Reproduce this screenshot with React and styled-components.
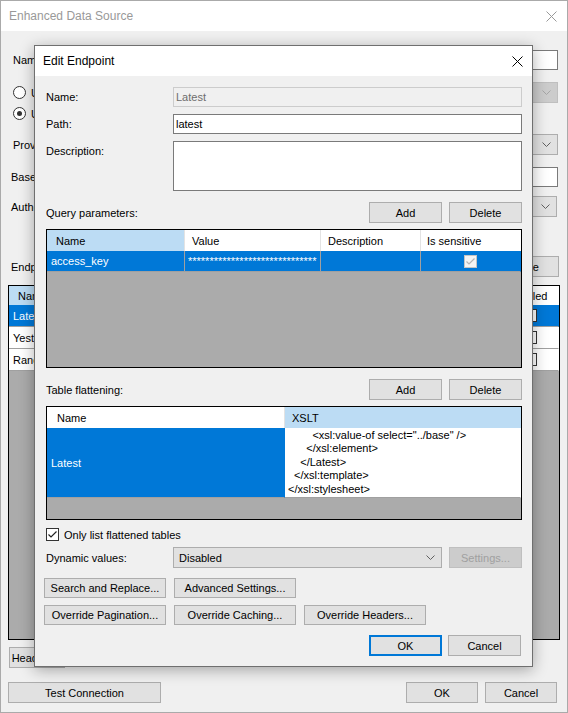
import React from 'react';
import styled, { createGlobalStyle, css } from 'styled-components';

const Global = createGlobalStyle`
  html, body { margin: 0; padding: 0; background: #f0f0f0; }
  body { font-family: "Liberation Sans", Arial, sans-serif; font-size: 11px; color: #000; }
  * { box-sizing: border-box; }
`;

const Window = styled.div`
  position: relative;
  width: 568px;
  height: 713px;
  border: 1px solid #aaaaaa;
  background: #f0f0f0;
  display: flex;
  flex-direction: column;
  overflow: hidden;
`;

const TitleBar = styled.div`
  flex-shrink: 0;
  height: 30px;
  background: #ffffff;
  display: flex;
  align-items: center;
  justify-content: space-between;
  padding: 0 ${(p) => p.$pr}px 0 ${(p) => p.$pl}px;
`;

const TitleText = styled.span`
  font-size: 12px;
  color: ${(p) => (p.$inactive ? '#999999' : '#000000')};
`;

const CloseIcon = ({ color }) => (
  <svg width="11" height="11" viewBox="0 0 11 11">
    <path d="M0.5 0.5 L10.5 10.5 M10.5 0.5 L0.5 10.5" stroke={color} strokeWidth="1" fill="none" />
  </svg>
);

const Chevron = ({ color }) => (
  <svg width="9" height="5" viewBox="0 0 9 5">
    <polyline points="0.5,0.5 4.5,4.5 8.5,0.5" stroke={color} strokeWidth="1" fill="none" />
  </svg>
);

const CheckMark = ({ color }) => (
  <svg width="11" height="11" viewBox="0 0 11 11">
    <polyline points="1.5,5.5 4,8 9.5,2.5" stroke={color} strokeWidth="1.2" fill="none" />
  </svg>
);

/* ---------- shared controls ---------- */

const TextBox = styled.div`
  flex-shrink: 0;
  width: ${(p) => p.$w}px;
  height: ${(p) => p.$h || 20}px;
  margin-right: ${(p) => p.$mr || 0}px;
  background: ${(p) => (p.$disabled ? '#f0f0f0' : '#ffffff')};
  border: 1px solid ${(p) => (p.$disabled ? '#cccccc' : '#7a7a7a')};
  color: ${(p) => (p.$disabled ? '#6d6d6d' : '#000000')};
  padding: 2px 0 0 2px;
  line-height: 14px;
`;

const Combo = styled.div`
  flex-shrink: 0;
  width: ${(p) => p.$w}px;
  height: 21px;
  margin-right: ${(p) => p.$mr || 0}px;
  display: flex;
  align-items: center;
  justify-content: space-between;
  padding: 0 6px 0 5px;
  background: ${(p) => (p.$disabled ? '#cccccc' : '#e1e1e1')};
  border: 1px solid ${(p) => (p.$disabled ? '#bfbfbf' : '#adadad')};
  color: ${(p) => (p.$disabled ? '#a0a0a0' : '#000000')};
`;

const Button = styled.button`
  flex-shrink: 0;
  width: ${(p) => p.$w}px;
  height: ${(p) => p.$h || 21}px;
  margin: 0 ${(p) => p.$mr || 0}px 0 ${(p) => p.$ml || 0}px;
  padding: 0;
  font: inherit;
  color: #000;
  background: #e1e1e1;
  border: 1px solid #adadad;
  display: flex;
  align-items: center;
  justify-content: center;
  white-space: nowrap;
  ${(p) =>
    p.$disabled &&
    css`
      background: #cccccc;
      border-color: #bfbfbf;
      color: #a0a0a0;
    `}
  ${(p) =>
    p.$default &&
    css`
      border: 2px solid #0078d7;
    `}
`;

const Radio = styled.span`
  flex-shrink: 0;
  width: 13px;
  height: 13px;
  border-radius: 50%;
  border: 1px solid #333333;
  background: #ffffff;
  display: inline-flex;
  align-items: center;
  justify-content: center;
  &::after {
    content: '';
    width: 5px;
    height: 5px;
    border-radius: 50%;
    background: #333333;
    display: ${(p) => (p.$checked ? 'block' : 'none')};
  }
`;

const CheckBox = styled.span`
  flex-shrink: 0;
  width: 13px;
  height: 13px;
  border: 1px solid ${(p) => (p.$muted ? '#c4c4c4' : '#333333')};
  background: ${(p) => (p.$muted ? '#f4f4f4' : '#ffffff')};
  display: inline-flex;
  align-items: center;
  justify-content: center;
`;

const Spacer = styled.div`
  flex: 1;
`;

/* ---------- grids ---------- */

const GridFrame = styled.div`
  flex: 1;
  height: ${(p) => p.$h}px;
  border: 1px solid #000000;
  background: #ababab;
  overflow: hidden;
`;

const GridRow = styled.div`
  display: grid;
  grid-template-columns: ${(p) => p.$cols};
  height: ${(p) => p.$h}px;
`;

const HeadCell = styled.div`
  display: flex;
  align-items: center;
  padding-left: ${(p) => p.$pl || 7}px;
  background: ${(p) => (p.$active ? '#bcdcf4' : '#ffffff')};
  border-right: 1px solid ${(p) => (p.$last ? 'transparent' : '#e3e3e3')};
  white-space: nowrap;
  overflow: hidden;
`;

const Cell = styled.div`
  display: flex;
  align-items: center;
  justify-content: ${(p) => (p.$center ? 'center' : 'flex-start')};
  padding-left: ${(p) => (p.$center ? 0 : p.$pl || 4)}px;
  background: ${(p) => (p.$sel ? '#0078d7' : '#ffffff')};
  color: ${(p) => (p.$sel ? '#ffffff' : '#000000')};
  border-right: 1px solid ${(p) => (p.$noSep ? 'transparent' : '#a0a0a0')};
  border-bottom: 1px solid #a0a0a0;
  white-space: nowrap;
  overflow: hidden;
`;

const Stars = styled.span`
  font-size: 11px;
`;

const XsltText = styled.pre`
  margin: 0;
  font: inherit;
  line-height: 13.6px;
  white-space: pre;
`;

/* ---------- outer window ---------- */

const OuterBody = styled.div`
  flex: 1;
  display: flex;
  flex-direction: column;
  padding: 0 7px;
`;

const ORow = styled.div`
  flex-shrink: 0;
  display: flex;
  align-items: center;
  height: ${(p) => p.$h}px;
  margin-top: ${(p) => p.$mt}px;
  padding-left: ${(p) => p.$pl || 0}px;
  gap: ${(p) => p.$gap || 0}px;
`;

const OLabel = styled.span`
  white-space: nowrap;
`;

/* ---------- dialog (overlay over the outer window) ---------- */

const Dialog = styled.div`
  position: absolute;
  left: 33px;
  top: 44px;
  width: 499px;
  height: 622px;
  border: 1px solid #6f6f6f;
  background: #f0f0f0;
  box-shadow: 0 3px 14px rgba(0, 0, 0, 0.32);
  display: flex;
  flex-direction: column;
`;

const DialogBody = styled.div`
  flex: 1;
  display: flex;
  flex-direction: column;
  padding: 0 10px 0 11px;
`;

const DRow = styled.div`
  flex-shrink: 0;
  display: flex;
  align-items: ${(p) => (p.$top ? 'flex-start' : 'center')};
  justify-content: ${(p) => (p.$end ? 'flex-end' : 'flex-start')};
  height: ${(p) => p.$h}px;
  margin: ${(p) => p.$mt}px ${(p) => p.$mr || 0}px 0 ${(p) => p.$ml || 0}px;
  gap: ${(p) => p.$gap || 0}px;
`;

const DLabel = styled.div`
  flex-shrink: 0;
  width: ${(p) => p.$w || 127}px;
  padding-top: ${(p) => p.$pt || 0}px;
  white-space: nowrap;
`;

const CheckLabel = styled.span`
  margin-left: 5px;
`;

const ButtonPair = styled.div`
  display: flex;
  gap: 7px;
  margin-left: auto;
`;

const xslt = `        <xsl:value-of select="../base" />
      </xsl:element>
    </Latest>
  </xsl:template>
</xsl:stylesheet>`;

export default function App() {
  const outerCols = '160px 150px 183px 57px';
  const q1Cols = '138px 136px 100px 100px';
  const q2Cols = '238px 236px';
  const outerRows = [
    ['Latest', 'latest', true],
    ['Yesterday', 'yesterday', false],
    ['Range', 'range', false],
  ];

  return (
    <>
      <Global />
      <Window>
        <TitleBar $pl={8} $pr={10}>
          <TitleText $inactive>Enhanced Data Source</TitleText>
          <CloseIcon color="#999999" />
        </TitleBar>
        <OuterBody>
          <ORow $h={20} $mt={19} $pl={5}>
            <OLabel>Name:</OLabel>
            <Spacer />
            <TextBox $w={438} $mr={2}>Enhanced source</TextBox>
          </ORow>
          <ORow $h={21} $mt={12} $pl={5} $gap={5}>
            <Radio />
            <OLabel>Use provider template</OLabel>
            <Spacer />
            <Combo $w={300} $mr={2} $disabled>
              <span />
              <Chevron color="#a6a6a6" />
            </Combo>
          </ORow>
          <ORow $h={13} $mt={4} $pl={5} $gap={5}>
            <Radio $checked />
            <OLabel>Use custom settings</OLabel>
          </ORow>
          <ORow $h={21} $mt={14} $pl={5}>
            <OLabel>Provider:</OLabel>
            <Spacer />
            <Combo $w={438} $mr={2}>
              <span>REST</span>
              <Chevron color="#606060" />
            </Combo>
          </ORow>
          <ORow $h={20} $mt={12} $pl={3}>
            <OLabel>Base URL:</OLabel>
            <Spacer />
            <TextBox $w={438} $mr={2}>https://api.example.com/</TextBox>
          </ORow>
          <ORow $h={21} $mt={9} $pl={3}>
            <OLabel>Authentication:</OLabel>
            <Spacer />
            <Combo $w={436} $mr={3}>
              <span>Query parameters</span>
              <Chevron color="#606060" />
            </Combo>
          </ORow>
          <ORow $h={21} $mt={39} $pl={3} $gap={7}>
            <OLabel>Endpoints:</OLabel>
            <Spacer />
            <Button $w={72}>Add</Button>
            <Button $w={72} $mr={1}>Delete</Button>
          </ORow>
          <ORow $h={355} $mt={8}>
            <GridFrame $h={355}>
              <GridRow $cols={outerCols} $h={19}>
                <HeadCell $active $pl={9}>Name</HeadCell>
                <HeadCell>Path</HeadCell>
                <HeadCell>Description</HeadCell>
                <HeadCell $last $pl={5}>Enabled</HeadCell>
              </GridRow>
              {outerRows.map(([n, p, sel]) => (
                <GridRow key={n} $cols={outerCols} $h={22}>
                  <Cell $sel={sel}>{n}</Cell>
                  <Cell $sel={sel}>{p}</Cell>
                  <Cell $sel={sel} />
                  <Cell $sel={sel} $center $noSep>
                    <CheckBox />
                  </Cell>
                </GridRow>
              ))}
            </GridFrame>
          </ORow>
          <ORow $h={21} $mt={7}>
            <Button $w={56} $ml={1}>Headers...</Button>
          </ORow>
          <ORow $h={21} $mt={14} $gap={7}>
            <Button $w={153}>Test Connection</Button>
            <Spacer />
            <Button $w={72}>OK</Button>
            <Button $w={72} $mr={3}>Cancel</Button>
          </ORow>
        </OuterBody>

        <Dialog>
          <TitleBar $pl={8} $pr={9}>
            <TitleText>Edit Endpoint</TitleText>
            <CloseIcon color="#000000" />
          </TitleBar>
          <DialogBody>
            <DRow $h={20} $mt={11}>
              <DLabel>Name:</DLabel>
              <TextBox $w={349} $disabled>Latest</TextBox>
            </DRow>
            <DRow $h={20} $mt={7}>
              <DLabel>Path:</DLabel>
              <TextBox $w={349}>latest</TextBox>
            </DRow>
            <DRow $h={50} $mt={7} $top>
              <DLabel $pt={4}>Description:</DLabel>
              <TextBox $w={349} $h={50} />
            </DRow>
            <DRow $h={21} $mt={11}>
              <DLabel>Query parameters:</DLabel>
              <ButtonPair>
                <Button $w={73}>Add</Button>
                <Button $w={73}>Delete</Button>
              </ButtonPair>
            </DRow>
            <DRow $h={139} $mt={6}>
              <GridFrame $h={139}>
                <GridRow $cols={q1Cols} $h={21}>
                  <HeadCell $active $pl={9}>Name</HeadCell>
                  <HeadCell>Value</HeadCell>
                  <HeadCell>Description</HeadCell>
                  <HeadCell $last $pl={6}>Is sensitive</HeadCell>
                </GridRow>
                <GridRow $cols={q1Cols} $h={21}>
                  <Cell $sel>access_key</Cell>
                  <Cell $sel $pl={3}>
                    <Stars>{'*'.repeat(30)}</Stars>
                  </Cell>
                  <Cell $sel />
                  <Cell $sel $center $noSep>
                    <CheckBox $muted>
                      <CheckMark color="#b4b4b4" />
                    </CheckBox>
                  </Cell>
                </GridRow>
              </GridFrame>
            </DRow>
            <DRow $h={21} $mt={11}>
              <DLabel>Table flattening:</DLabel>
              <ButtonPair>
                <Button $w={73}>Add</Button>
                <Button $w={73}>Delete</Button>
              </ButtonPair>
            </DRow>
            <DRow $h={114} $mt={6}>
              <GridFrame $h={114}>
                <GridRow $cols={q2Cols} $h={21}>
                  <HeadCell $pl={10}>Name</HeadCell>
                  <HeadCell $active $last>XSLT</HeadCell>
                </GridRow>
                <GridRow $cols={q2Cols} $h={70}>
                  <Cell $sel $noSep>Latest</Cell>
                  <Cell $pl={3} $noSep>
                    <XsltText>{xslt}</XsltText>
                  </Cell>
                </GridRow>
              </GridFrame>
            </DRow>
            <DRow $h={13} $mt={8}>
              <CheckBox>
                <CheckMark color="#222222" />
              </CheckBox>
              <CheckLabel>Only list flattened tables</CheckLabel>
            </DRow>
            <DRow $h={21} $mt={6} $gap={7}>
              <DLabel $w={120}>Dynamic values:</DLabel>
              <Combo $w={269}>
                <span>Disabled</span>
                <Chevron color="#606060" />
              </Combo>
              <Button $w={73} $disabled>Settings...</Button>
            </DRow>
            <DRow $h={20} $mt={10} $ml={-2} $gap={8}>
              <Button $w={122} $h={20}>Search and Replace...</Button>
              <Button $w={122} $h={20}>Advanced Settings...</Button>
            </DRow>
            <DRow $h={20} $mt={7} $ml={-2} $gap={8}>
              <Button $w={122} $h={20}>Override Pagination...</Button>
              <Button $w={122} $h={20}>Override Caching...</Button>
              <Button $w={122} $h={20}>Override Headers...</Button>
            </DRow>
            <DRow $h={21} $mt={10} $mr={1} $gap={6} $end>
              <Button $w={73} $default>OK</Button>
              <Button $w={73}>Cancel</Button>
            </DRow>
          </DialogBody>
        </Dialog>
      </Window>
    </>
  );
}
